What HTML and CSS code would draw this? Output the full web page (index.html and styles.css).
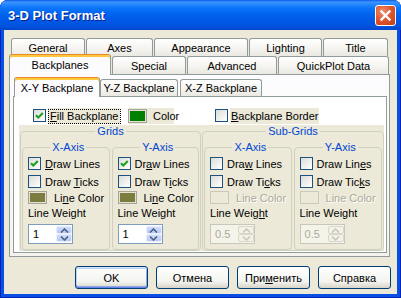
FILE: index.html
```html
<html lang="ru">

<head>
    <meta charset="UTF-8">
    <title>3-D Plot Format</title>
    <link rel="stylesheet" href="styles.css">
</head>

<body>
    <div class="window">
        <div class="titlebar">
            <span class="title">3-D Plot Format</span>
            <span class="close">
                <svg width="13" height="13" viewBox="0 0 13 13">
                    <path d="M2.5 2.5L10.5 10.5M10.5 2.5L2.5 10.5" stroke="#fff" stroke-width="2.4" stroke-linecap="square" />
                </svg>
            </span>
        </div>
        <div class="client">
            <!-- главные вкладки, два ряда -->
            <div class="tabrow row1">
                <div class="tab t-general">General</div>
                <div class="tab t-axes">Axes</div>
                <div class="tab t-appearance">Appearance</div>
                <div class="tab t-lighting">Lighting</div>
                <div class="tab t-title">Title</div>
            </div>
            <div class="tabrow row2">
                <div class="tab sel t-backplanes">Backplanes</div>
                <div class="tab t-special">Special</div>
                <div class="tab t-advanced">Advanced</div>
                <div class="tab t-quickplot">QuickPlot Data</div>
            </div>
            <div class="page">
                <div class="subtabs">
                    <div class="tab sel t-xy">X-Y Backplane</div>
                    <div class="tab t-yz">Y-Z Backplane</div>
                    <div class="tab t-xz">X-Z Backplane</div>
                </div>
                <div class="subpage">
                    <div class="toprow">
                        <span class="check on fill-check">
                            <svg width="11" height="11" viewBox="0 0 11 11"><path d="M2 5.2L4.3 7.5L8.8 3" stroke="#21A121" stroke-width="2.2" fill="none" /></svg>
                        </span>
                        <span class="plate fill-label"><span class="focus"><u>F</u>ill Backplane</span></span>
                        <span class="plate color-plate">
                            <span class="swatch green"></span>
                            <span>Color</span>
                        </span>
                        <span class="check border-check"></span>
                        <span class="plate border-label"><span><u>B</u>ackplane Border</span></span>
                    </div>
                    <div class="groups">
                        <fieldset class="group grids">
                            <legend>Grids</legend>
                            <div class="pair">
                                <fieldset class="axis">
                                    <legend>X-Axis</legend>
                                    <div class="item r1">
                                        <span class="check on"><svg width="11" height="11" viewBox="0 0 11 11"><path d="M2 5.2L4.3 7.5L8.8 3" stroke="#21A121" stroke-width="2.2" fill="none" /></svg></span>
                                        <span><u>D</u>raw Lines</span>
                                    </div>
                                    <div class="item r2">
                                        <span class="check"></span>
                                        <span>Draw <u>T</u>icks</span>
                                    </div>
                                    <div class="item r3">
                                        <span class="swatch olive"></span>
                                        <span>Li<u>n</u>e Color</span>
                                    </div>
                                    <div class="item r4"><span>Line Weight</span></div>
                                    <div class="spin r5">
                                        <span class="value">1</span>
                                        <span class="arrows">
                                            <span class="arr"><svg width="9" height="5" viewBox="0 0 9 5"><path d="M1 4.5L4.5 1L8 4.5" stroke="#4D6185" stroke-width="1.6" fill="none" /></svg></span>
                                            <span class="arr"><svg width="9" height="5" viewBox="0 0 9 5"><path d="M1 0.5L4.5 4L8 0.5" stroke="#4D6185" stroke-width="1.6" fill="none" /></svg></span>
                                        </span>
                                    </div>
                                </fieldset>
                                <fieldset class="axis">
                                    <legend>Y-Axis</legend>
                                    <div class="item r1">
                                        <span class="check on"><svg width="11" height="11" viewBox="0 0 11 11"><path d="M2 5.2L4.3 7.5L8.8 3" stroke="#21A121" stroke-width="2.2" fill="none" /></svg></span>
                                        <span>Dr<u>a</u>w Lines</span>
                                    </div>
                                    <div class="item r2">
                                        <span class="check"></span>
                                        <span>Draw T<u>i</u>cks</span>
                                    </div>
                                    <div class="item r3">
                                        <span class="swatch olive"></span>
                                        <span>Li<u>n</u>e Color</span>
                                    </div>
                                    <div class="item r4"><span>Line Weight</span></div>
                                    <div class="spin r5">
                                        <span class="value">1</span>
                                        <span class="arrows">
                                            <span class="arr"><svg width="9" height="5" viewBox="0 0 9 5"><path d="M1 4.5L4.5 1L8 4.5" stroke="#4D6185" stroke-width="1.6" fill="none" /></svg></span>
                                            <span class="arr"><svg width="9" height="5" viewBox="0 0 9 5"><path d="M1 0.5L4.5 4L8 0.5" stroke="#4D6185" stroke-width="1.6" fill="none" /></svg></span>
                                        </span>
                                    </div>
                                </fieldset>
                            </div>
                        </fieldset>
                        <fieldset class="group subgrids">
                            <legend>Sub-Grids</legend>
                            <div class="pair">
                                <fieldset class="axis">
                                    <legend>X-Axis</legend>
                                    <div class="item r1">
                                        <span class="check"></span>
                                        <span>Dra<u>w</u> Lines</span>
                                    </div>
                                    <div class="item r2">
                                        <span class="check"></span>
                                        <span>Draw Ti<u>c</u>ks</span>
                                    </div>
                                    <div class="item r3 disabled">
                                        <span class="swatch empty"></span>
                                        <span>Line Color</span>
                                    </div>
                                    <div class="item r4"><span>Line Weig<u>h</u>t</span></div>
                                    <div class="spin r5 off">
                                        <span class="value">0.5</span>
                                        <span class="arrows">
                                            <span class="arr"><svg width="9" height="5" viewBox="0 0 9 5"><path d="M1 4.5L4.5 1L8 4.5" stroke="#C9C7BA" stroke-width="1.6" fill="none" /></svg></span>
                                            <span class="arr"><svg width="9" height="5" viewBox="0 0 9 5"><path d="M1 0.5L4.5 4L8 0.5" stroke="#C9C7BA" stroke-width="1.6" fill="none" /></svg></span>
                                        </span>
                                    </div>
                                </fieldset>
                                <fieldset class="axis wide">
                                    <legend>Y-Axis</legend>
                                    <div class="item r1">
                                        <span class="check"></span>
                                        <span>Draw Lin<u>e</u>s</span>
                                    </div>
                                    <div class="item r2">
                                        <span class="check"></span>
                                        <span>Draw Tic<u>k</u>s</span>
                                    </div>
                                    <div class="item r3 disabled">
                                        <span class="swatch empty"></span>
                                        <span>Line Color</span>
                                    </div>
                                    <div class="item r4"><span>Line Weight</span></div>
                                    <div class="spin r5 off">
                                        <span class="value">0.5</span>
                                        <span class="arrows">
                                            <span class="arr"><svg width="9" height="5" viewBox="0 0 9 5"><path d="M1 4.5L4.5 1L8 4.5" stroke="#C9C7BA" stroke-width="1.6" fill="none" /></svg></span>
                                            <span class="arr"><svg width="9" height="5" viewBox="0 0 9 5"><path d="M1 0.5L4.5 4L8 0.5" stroke="#C9C7BA" stroke-width="1.6" fill="none" /></svg></span>
                                        </span>
                                    </div>
                                </fieldset>
                            </div>
                        </fieldset>
                    </div>
                </div>
            </div>
            <div class="buttons">
                <div class="btn default">OK</div>
                <div class="btn">Отмена</div>
                <div class="btn">При<u>м</u>енить</div>
                <div class="btn">Справка</div>
            </div>
        </div>
    </div>
</body>

</html>
```

FILE: styles.css
```css
body {
    margin: 0;
    font-family: "Liberation Sans", Arial, sans-serif;
    font-size: 11px;
    color: #000;
    background-color: #fff;
}

.window {
    width: 401px;
    height: 298px;
    display: flex;
    flex-direction: column;
    background-color: #0A4FE3;
    border-radius: 8px 8px 0 0;
    box-shadow: inset 1px 0 #0024B8, inset -1px 0 #0024B8, inset 0 -1px #0024B8;
}

.titlebar {
    height: 30px;
    flex: none;
    display: flex;
    align-items: center;
    justify-content: space-between;
    padding: 0 5px 0 8px;
    border-radius: 8px 8px 0 0;
    background: linear-gradient(#0A5AE6 0, #3D95FF 2px, #2A89FF 4px, #0B75FB 8px, #0064EF 14px, #005AE7 20px, #0052DE 26px, #0045CF 30px);
}

.title {
    color: #fff;
    font-weight: bold;
    font-size: 13px;
    text-shadow: 1px 1px #0A1E8C;
}

.close {
    width: 21px;
    height: 21px;
    box-sizing: border-box;
    border: 1px solid #fff;
    border-radius: 3px;
    background: radial-gradient(circle at 35% 30%, #F0906E 0, #E0582F 45%, #C23B17 100%);
    display: flex;
    align-items: center;
    justify-content: center;
}

.client {
    flex: 1;
    margin: 0 4px 4px;
    padding-top: 8px;
    background-color: #ECE9D8;
    display: flex;
    flex-direction: column;
}

/* вкладки */
.tabrow {
    display: flex;
    align-items: flex-start;
    gap: 1px;
    height: 18px;
}

.row1 {
    padding-left: 7px;
}

.row2 {
    padding-left: 5px;
}

.tab {
    box-sizing: border-box;
    height: 18px;
    border: 1px solid #919B9C;
    border-bottom: none;
    border-radius: 3px 3px 0 0;
    background: linear-gradient(#FFFFFF, #F5F4F0 55%, #E9E8E1);
    display: flex;
    align-items: center;
    justify-content: center;
    white-space: nowrap;
}

.tab.sel {
    height: 21px;
    margin-top: -2px;
    border-top: 1px solid #E68B2C;
    box-shadow: inset 0 2px #FFC83C;
    background: #FCFCFE;
    position: relative;
    z-index: 1;
}

.t-general { width: 74px; }
.t-axes { width: 67px; }
.t-appearance { width: 94px; }
.t-lighting { width: 73px; }
.t-title { width: 65px; }
.t-backplanes { width: 102px; }
.t-special { width: 74px; }
.t-advanced { width: 90px; }
.t-quickplot { width: 111px; }

.page {
    margin-left: 5px;
    width: 381px;
    height: 183px;
    box-sizing: border-box;
    border: 1px solid #919B9C;
    background: linear-gradient(#FCFCFE, #F4F3EE);
    padding: 2px 2px 3px 3px;
    display: flex;
    flex-direction: column;
}

.subtabs {
    display: flex;
    align-items: flex-start;
    height: 19px;
    flex: none;
}

.subtabs .tab {
    height: 17px;
    margin-top: 2px;
}

.subtabs .tab.sel {
    height: 20px;
    margin-top: 0;
}

.t-xy { width: 86px; margin-left: 1px; }
.t-yz { width: 78px; }
.t-xz { width: 82px; margin-left: 2px; }

.subpage {
    height: 157px;
    box-sizing: border-box;
    border: 1px solid #919B9C;
    background-color: #FFFFFF;
    padding: 11px 2px 0 5px;
    display: flex;
    flex-direction: column;
}

.toprow {
    height: 17px;
    flex: none;
    display: flex;
    align-items: flex-start;
}

.plate {
    height: 16px;
    background-color: #ECE9D8;
    display: flex;
    align-items: center;
    box-sizing: border-box;
}

.fill-check { margin: 1px 0 0 14px; }

.fill-label {
    margin-left: 2px;
    width: 72px;
    padding-left: 1px;
}

.focus {
    outline: 1px dotted #000;
    padding: 0 1px;
    line-height: 13px;
}

.color-plate {
    margin-left: 8px;
    width: 46px;
    gap: 6px;
}

.border-check { margin: 1px 0 0 41px; }

.border-label {
    margin-left: 2px;
    width: 89px;
    padding-left: 1px;
}

/* флажки и образцы цвета */
.check {
    width: 13px;
    height: 13px;
    box-sizing: border-box;
    flex: none;
    border: 1px solid #1C5180;
    background: linear-gradient(135deg, #DCDCD7, #FFFFFF);
    display: flex;
    align-items: center;
    justify-content: center;
}

.swatch {
    width: 19px;
    height: 14px;
    box-sizing: border-box;
    flex: none;
    border: 1px solid #A7A696;
    box-shadow: inset 0 0 0 1px #E3E1D5;
}

.swatch.green { background-color: #008000; }
.swatch.olive { background-color: #7C7C3E; height: 13px; }
.swatch.empty { background-color: #ECE9D8; height: 13px; border-color: #CAC8BB; box-shadow: none; }

.groups {
    height: 126px;
    flex: none;
    display: flex;
    background-color: #ECE9D8;
}

fieldset {
    margin: 0;
    min-inline-size: 0;
    border: 1px solid #D0D0BF;
    border-radius: 4px;
}

legend {
    margin: 0 auto;
    padding: 0 2px;
    color: #0046D5;
    line-height: 13px;
}

.group {
    padding: 3px 1px 0;
}

.grids { width: 180px; margin-left: 1px; }
.subgrids { width: 181px; margin-left: 1px; }

.pair {
    display: flex;
    gap: 2px;
}

.axis {
    width: 88px;
    box-sizing: border-box;
    padding: 3px 0 5px 5px;
}

.axis.wide { width: 89px; }

.item {
    display: flex;
    align-items: center;
    height: 13px;
    gap: 4px;
    white-space: nowrap;
}

.r2 { margin-top: 5px; }
.r3 { margin-top: 3px; gap: 7px; }
.r4 { margin-top: 2px; }
.r5 { margin-top: 5px; }

.disabled {
    color: #ACA899;
    text-shadow: 1px 1px #fff;
}

.spin {
    width: 45px;
    height: 20px;
    box-sizing: border-box;
    border: 1px solid #7F9DB9;
    background-color: #fff;
    display: flex;
    justify-content: space-between;
    padding: 1px 0 1px 4px;
}

.value {
    line-height: 17px;
}

.arrows {
    width: 16px;
    display: flex;
    flex-direction: column;
}

.arr {
    flex: 1;
    border: 1px solid #E8EEFD;
    border-radius: 2px;
    background: linear-gradient(#CFDCFB, #B8CAF5);
    display: flex;
    align-items: center;
    justify-content: center;
}

.spin.off {
    border-color: #C9C7BA;
    background-color: #F5F4EA;
    color: #ACA899;
}

.spin.off .arr {
    border-color: #D8D6CB;
    background: #F3F1E8;
}

/* кнопки */
.buttons {
    display: flex;
    justify-content: flex-end;
    gap: 8px;
    margin-top: 9px;
    padding-right: 6px;
}

.btn {
    width: 73px;
    height: 23px;
    box-sizing: border-box;
    border: 1px solid #003C74;
    border-radius: 3px;
    background: linear-gradient(#FFFFFF, #F3F3EF 70%, #D8D3C7);
    display: flex;
    align-items: center;
    justify-content: center;
}

.btn.default {
    box-shadow: inset 0 1px #CEE7FF, inset 0 2px #BCD4F6, inset 0 -1px #6982EE, inset 0 -2px #89ADE4, inset 1px 0 #B8D6FB, inset -1px 0 #89ADE4;
}
```
